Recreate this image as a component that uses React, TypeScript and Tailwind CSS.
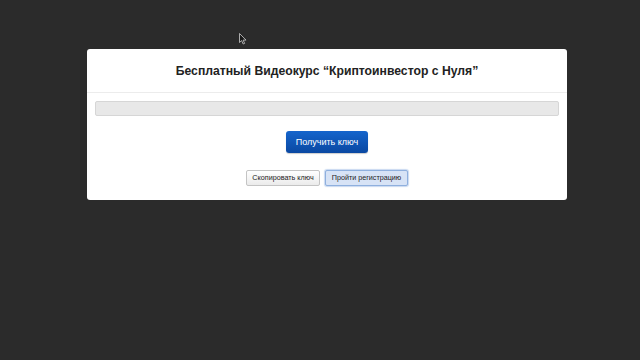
import React from "react";

export default function App() {
  return (
    <div className="relative w-[640px] h-[360px] bg-[#2b2b2b] pt-[49px] overflow-hidden" style={{ fontFamily: '"Liberation Sans", Arial, sans-serif' }}>
      <svg className="absolute left-[239px] top-[33px]" width="8" height="12" viewBox="0 0 8 12">
        <path d="M0.5 0.5 L0.5 9.5 L2.6 7.6 L4.2 11 L5.6 10.4 L4.1 7.1 L7 7.1 Z" fill="#1a1a1a" stroke="#cfcfcf" strokeWidth="0.8" />
      </svg>
      <div className="ml-[87px] w-[480px] h-[151px] bg-white rounded-[3px] flex flex-col">
        <div className="h-[44px] border-b border-[#ececec] flex items-center justify-center">
          <h1 className="text-[12.2px] font-bold text-[#222] leading-none pt-[2px]">Бесплатный Видеокурс “Криптоинвестор с Нуля”</h1>
        </div>
        <div className="flex flex-col items-center px-[8px] pt-[8px]">
          <div className="w-full h-[15px] bg-[#e8e8e8] border border-[#d6d6d6] rounded-[2px]" />
          <button className="mt-[15px] w-[82px] h-[22px] rounded-[3px] bg-gradient-to-b from-[#1565cc] to-[#0a48a2] text-white text-[9px] leading-none shadow-[0_1px_1px_rgba(0,0,0,0.2)]">
            Получить ключ
          </button>
          <div className="mt-[17px] flex gap-[5px]">
            <button className="w-[74px] h-[16px] rounded-[2px] bg-gradient-to-b from-[#ffffff] to-[#ebebeb] border border-[#c4c4c4] text-[#222] text-[7.2px] leading-none">
              Скопировать ключ
            </button>
            <button className="w-[83px] h-[16px] rounded-[2px] bg-[#d7e3f6] border border-[#8fb0de] text-[#222] text-[7.2px] leading-none shadow-[0_0_1px_1px_rgba(120,160,220,0.4)]">
              Пройти регистрацию
            </button>
          </div>
        </div>
      </div>
    </div>
  );
}
